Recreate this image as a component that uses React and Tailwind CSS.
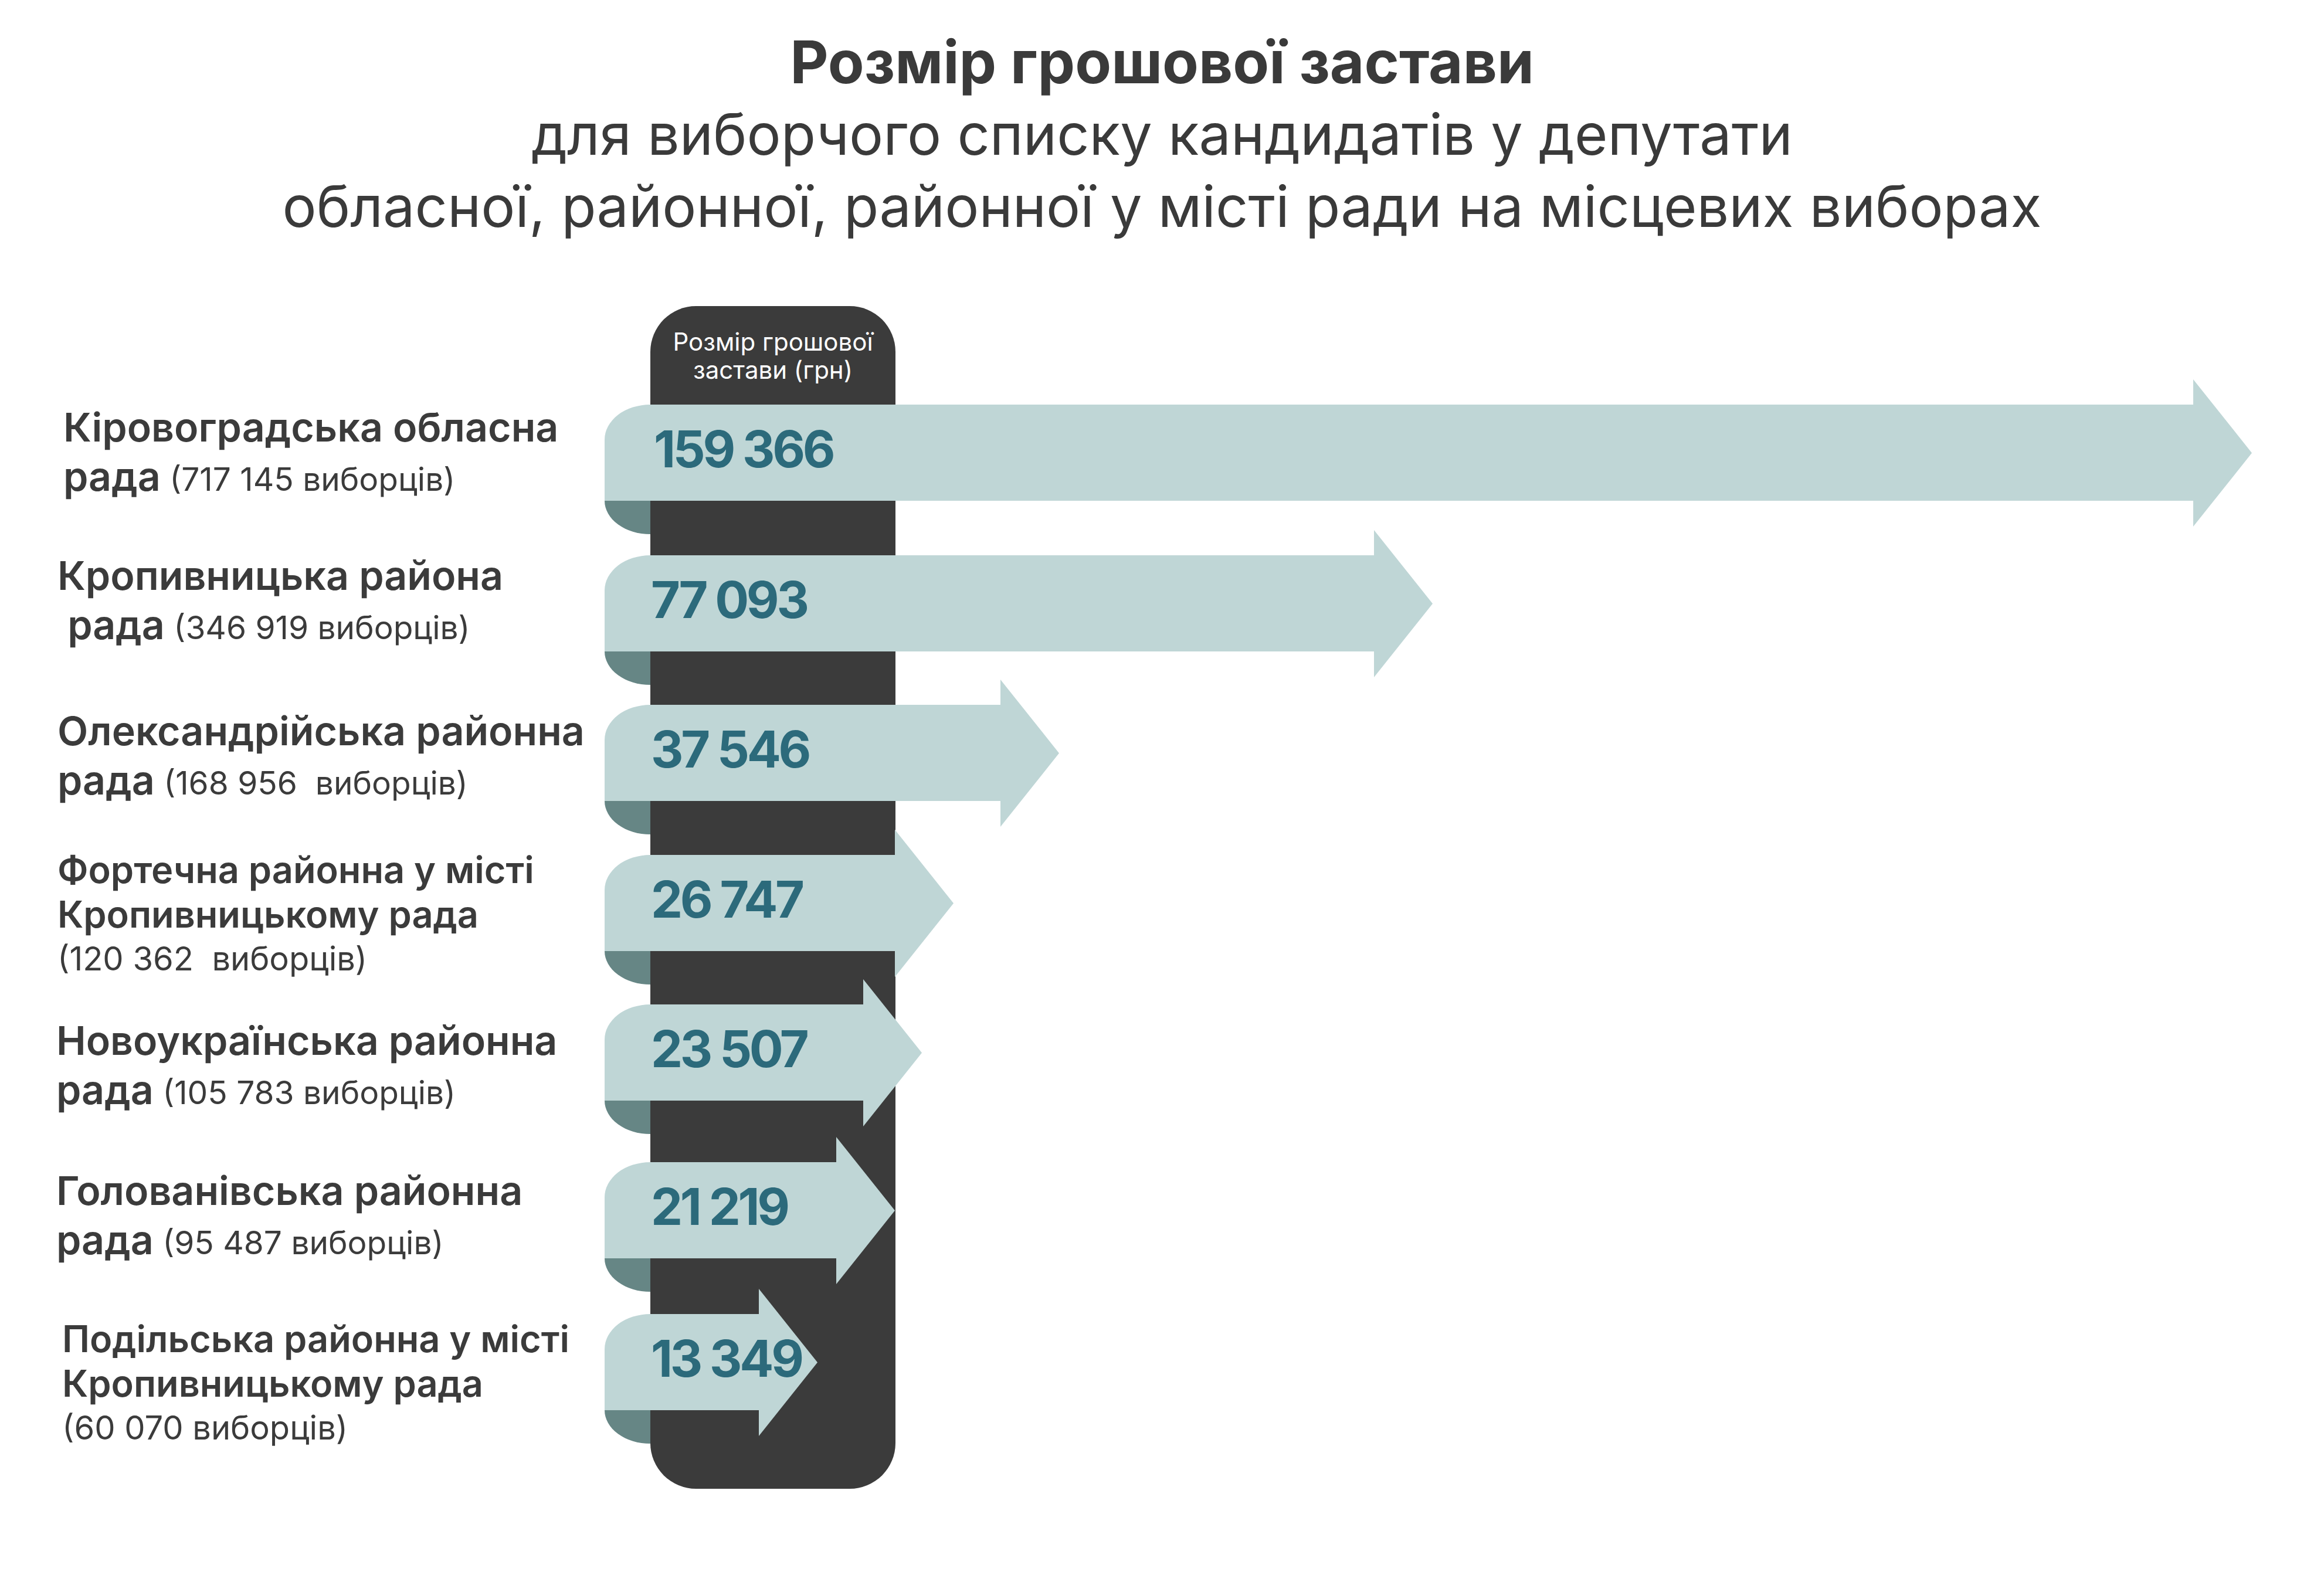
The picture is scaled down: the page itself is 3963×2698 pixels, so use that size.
import React from 'react'

// measured from the reference: bar body width in px (left edge to start of arrow head)
const rows = [
    {
        value: '159 366',
        body: 2710,
        gap: 'mt-0',
        numPad: 'pl-[84px]',
        label: 'pl-[108px] -mt-[4px]',
        lines: [{ b: 'Кіровоградська обласна' }, { b: 'рада', s: ' (717 145 виборців)' }],
    },
    {
        value: '77 093',
        body: 1313,
        gap: 'mt-[36px]',
        numPad: 'pl-[79px]',
        label: 'pl-[98px] -mt-[8px]',
        lines: [{ b: 'Кропивницька района' }, { b: ' рада', s: ' (346 919 виборців)' }],
    },
    {
        value: '37 546',
        body: 676,
        gap: 'mt-[34px]',
        numPad: 'pl-[79px]',
        label: 'pl-[98px] mt-[2px]',
        lines: [{ b: 'Олександрійська районна' }, { b: 'рада', s: ' (168 956  виборців)' }],
    },
    {
        value: '26 747',
        body: 496,
        gap: 'mt-[35px]',
        numPad: 'pl-[79px]',
        label: 'pl-[98px] -mt-[13px]',
        lines: [{ b: 'Фортечна районна у місті' }, { b: 'Кропивницькому рада' }, { s: '(120 362  виборців)' }],
    },
    {
        value: '23 507',
        body: 442,
        gap: 'mt-[34px]',
        numPad: 'pl-[79px]',
        label: 'pl-[96px] mt-[19px]',
        lines: [{ b: 'Новоукраїнська районна' }, { b: 'рада', s: ' (105 783 виборців)' }],
    },
    {
        value: '21 219',
        body: 396,
        gap: 'mt-[48px]',
        numPad: 'pl-[79px]',
        label: 'pl-[96px] mt-[6px]',
        lines: [{ b: 'Голованівська районна' }, { b: 'рада', s: ' (95 487 виборців)' }],
    },
    {
        value: '13 349',
        body: 264,
        gap: 'mt-[38px]',
        numPad: 'pl-[79px]',
        label: 'pl-[106px] mt-[4px]',
        lines: [{ b: 'Подільська районна у місті' }, { b: 'Кропивницькому рада' }, { s: '(60 070 виборців)' }],
    },
]

const Label = ({ row }) => {
    const three = row.lines.length === 3
    return (
        <div className={`w-[1031px] shrink-0 text-[#3b3b3b] ${row.label}`}>
            {row.lines.map((line, i) =>
                three ? (
                    <div
                        key={i}
                        className={`whitespace-pre leading-[76px] ${line.b ? 'text-[63px] font-semibold' : 'text-[56px] font-normal'}`}
                    >
                        {line.b || line.s}
                    </div>
                ) : (
                    <div key={i} className="whitespace-pre text-[68px] leading-[84px]">
                        {line.b && <span className="font-semibold">{line.b}</span>}
                        {line.s && <span className="text-[55px] font-normal leading-none">{line.s}</span>}
                    </div>
                )
            )}
        </div>
    )
}

const Bar = ({ row }) => (
    <div className="flex flex-col">
        <div className="flex items-center">
            {/* bar body */}
            <div
                className={`h-[164px] bg-[#bfd6d6] rounded-tl-[78px_60px] flex items-center pb-[12px] ${row.numPad}`}
                style={{ width: row.body }}
            >
                <span className="relative z-10 whitespace-nowrap text-[86px] font-bold leading-none tracking-[-0.05em] text-[#2c6a7b]">
                    {row.value}
                </span>
            </div>
            {/* arrow head */}
            <svg className="w-[100px] h-[251px] -my-[43.5px] -ml-px shrink-0" viewBox="0 0 100 251">
                <polygon points="0,0 100,125.5 0,251" fill="#bfd6d6" />
            </svg>
        </div>
        {/* folded end under the ribbon */}
        <div className="w-[78px] h-[57px] bg-[#668685] rounded-bl-[78px_57px]" />
    </div>
)

export default function App() {
    return (
        <div className="w-[3963px] h-[2698px] bg-white overflow-hidden font-['Inter','Noto_Sans',sans-serif]">
            {/* Title */}
            <div className="pt-[44px] text-center text-[#3a3a3a]">
                <div className="text-[101px] font-bold leading-[123px]">Розмір грошової застави</div>
                <div className="text-[97px] font-normal leading-[123px]">
                    для виборчого списку кандидатів у депутати
                </div>
                <div className="text-[97px] font-normal leading-[123px]">
                    обласної, районної, районної у місті ради на місцевих виборах
                </div>
            </div>

            {/* Chart */}
            <div className="relative pt-[277px]">
                <div className="absolute top-[109px] left-[1109px] w-[418px] h-[2017px] rounded-[78px] bg-[#3b3b3b] pt-[37px] text-center text-white text-[42px] leading-[48px]">
                    <div>Розмір грошової</div>
                    <div>застави (грн)</div>
                </div>

                {rows.map((row, i) => (
                    <div key={i} className={`relative flex items-start h-[221px] ${row.gap}`}>
                        <Label row={row} />
                        <Bar row={row} />
                    </div>
                ))}
            </div>
        </div>
    )
}
